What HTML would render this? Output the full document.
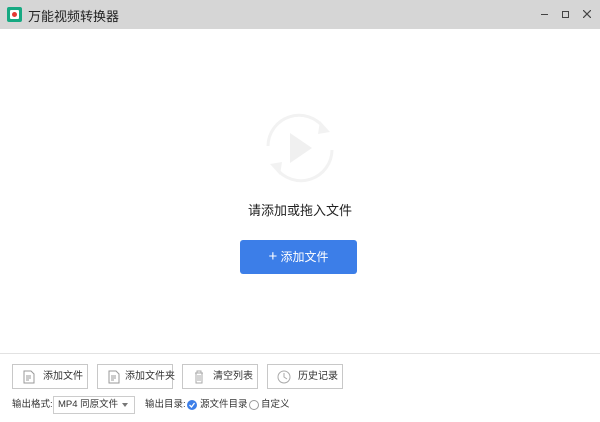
<!DOCTYPE html>
<html><head><meta charset="utf-8"><style>
*{margin:0;padding:0;box-sizing:border-box}
body{width:600px;height:422px;background:#fff;font-family:"Liberation Sans","Noto Sans CJK SC",sans-serif;position:relative;overflow:hidden;color:#333}
.a{position:absolute}
.tb{left:0;top:0;width:600px;height:29px;background:#d6d6d6}
.btn{height:25px;width:76px;border:1px solid #c8c8c8;background:#fff;font-size:10px;color:#333;top:364px}
.btn svg{position:absolute;left:9px;top:5px}
.btn span{position:absolute;left:30px;top:0;line-height:23px;white-space:nowrap}
.s{font-size:9.5px;color:#333;top:398px;line-height:14px;white-space:nowrap}
</style></head><body>
<div class="a tb"></div>
<div class="a" style="left:7px;top:7px;width:15px;height:15px;background:#17a982;border-radius:2px"></div>
<div class="a" style="left:10px;top:10px;width:9px;height:9px;background:#fff;border-radius:1px"></div>
<div class="a" style="left:12px;top:12px;width:5px;height:5px;background:#e53935;border-radius:50%"></div>
<div class="a" style="left:28px;top:6px;font-size:13px;color:#222">万能视频转换器</div>
<div class="a" style="left:541px;top:14px;width:7px;height:1px;background:#444"></div>
<div class="a" style="left:562px;top:11px;width:7px;height:7px;border:1.5px solid #444"></div>
<svg class="a" style="left:583px;top:10px" width="8" height="8"><path d="M0 0L8 8M8 0L0 8" stroke="#444" stroke-width="1.2"/></svg>

<svg class="a" style="left:260px;top:108px" width="80" height="80" viewBox="0 0 80 80">
<path d="M8 38 A31 31 0 0 1 64 20" fill="none" stroke="#f2f2f2" stroke-width="3"/>
<path d="M72 42 A31 31 0 0 1 16 60" fill="none" stroke="#f2f2f2" stroke-width="3"/>
<path d="M60 13 L70 24 L58 26 Z" fill="#f2f2f2"/>
<path d="M20 67 L10 56 L22 54 Z" fill="#f2f2f2"/>
<path d="M30 25 L52 40 L30 55 Z" fill="#f0f0f0"/>
</svg>
<div class="a" style="left:0;width:600px;top:200px;text-align:center;font-size:13px;color:#222">请添加或拖入文件</div>
<div class="a" style="left:240px;top:240px;width:117px;height:34px;background:#3c7ee8;border-radius:3px;color:#fff;font-size:12px;text-align:center;line-height:34px"><span style="font-size:15px">+</span> 添加文件</div>

<div class="a" style="left:0;top:353px;width:600px;height:1px;background:#e2e2e2"></div>

<div class="a btn" style="left:12px"><svg width="14" height="14"><path d="M2 1h7l3 3v9H2z M4 6h5 M4 8h5 M4 10h3" fill="none" stroke="#999"/></svg><span>添加文件</span></div>
<div class="a btn" style="left:97px"><svg width="14" height="14"><path d="M2 1h7l3 3v9H2z M4 6h5 M4 8h5 M4 10h3" fill="none" stroke="#999"/></svg><span style="left:27px">添加文件夹</span></div>
<div class="a btn" style="left:182px"><svg width="14" height="14"><path d="M3 3h8 M5 3V1h4v2 M4 3v10h6V3 M6 5v6 M8 5v6" fill="none" stroke="#aaa"/></svg><span>清空列表</span></div>
<div class="a btn" style="left:267px"><svg width="14" height="14"><circle cx="7" cy="7" r="6" fill="none" stroke="#aaa"/><path d="M7 3v4l3 2" fill="none" stroke="#aaa"/></svg><span>历史记录</span></div>

<div class="a s" style="left:12px">输出格式:</div>
<div class="a" style="left:53px;top:396px;width:82px;height:18px;border:1px solid #ccc;font-size:9.5px;padding-left:4px;line-height:16px">MP4 同原文件</div>
<div class="a" style="left:122px;top:403px;border:3.5px solid transparent;border-top:4px solid #777"></div>
<div class="a s" style="left:145px">输出目录:</div>
<div class="a" style="left:187px;top:400px;width:10px;height:10px;border-radius:50%;background:#3c7ee8"></div>
<svg class="a" style="left:187px;top:400px" width="10" height="10"><path d="M2.5 5L4.5 7L7.5 3" fill="none" stroke="#fff" stroke-width="1.3"/></svg>
<div class="a s" style="left:200px">源文件目录</div>
<div class="a" style="left:249px;top:400px;width:10px;height:10px;border-radius:50%;border:1px solid #999"></div>
<div class="a s" style="left:261px">自定义</div>
</body></html>
